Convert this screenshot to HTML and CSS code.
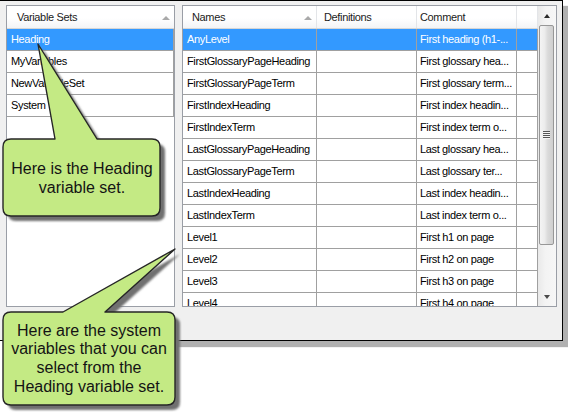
FILE: index.html
```html
<!DOCTYPE html>
<html>
<head>
<meta charset="utf-8">
<link rel="stylesheet" href="styles.css">
</head>
<body>
<div class="window">
  <div class="panes">
    <div class="list sets">
      <div class="hdr"><div class="hcell first"><span>Variable Sets</span><span class="sort"></span></div></div>
      <div class="row sel"><div class="cell">Heading</div></div>
      <div class="row"><div class="cell">MyVariables</div></div>
      <div class="row"><div class="cell">NewVariableSet</div></div>
      <div class="row"><div class="cell">System</div></div>
    </div>
    <div class="list vars">
      <div class="grid">
        <div class="hdr">
          <div class="hcell c1 first"><span>Names</span><span class="sort"></span></div>
          <div class="hcell c2"><span>Definitions</span></div>
          <div class="hcell c3"><span>Comment</span></div>
          <div class="hcell c4"></div>
        </div>
        <div class="row sel"><div class="cell c1">AnyLevel</div><div class="cell c2"></div><div class="cell c3">First heading (h1-...</div><div class="cell c4"></div></div>
        <div class="row"><div class="cell c1">FirstGlossaryPageHeading</div><div class="cell c2"></div><div class="cell c3">First glossary hea...</div><div class="cell c4"></div></div>
        <div class="row"><div class="cell c1">FirstGlossaryPageTerm</div><div class="cell c2"></div><div class="cell c3">First glossary term...</div><div class="cell c4"></div></div>
        <div class="row"><div class="cell c1">FirstIndexHeading</div><div class="cell c2"></div><div class="cell c3">First index headin...</div><div class="cell c4"></div></div>
        <div class="row"><div class="cell c1">FirstIndexTerm</div><div class="cell c2"></div><div class="cell c3">First index term o...</div><div class="cell c4"></div></div>
        <div class="row"><div class="cell c1">LastGlossaryPageHeading</div><div class="cell c2"></div><div class="cell c3">Last glossary hea...</div><div class="cell c4"></div></div>
        <div class="row"><div class="cell c1">LastGlossaryPageTerm</div><div class="cell c2"></div><div class="cell c3">Last glossary ter...</div><div class="cell c4"></div></div>
        <div class="row"><div class="cell c1">LastIndexHeading</div><div class="cell c2"></div><div class="cell c3">Last index headin...</div><div class="cell c4"></div></div>
        <div class="row"><div class="cell c1">LastIndexTerm</div><div class="cell c2"></div><div class="cell c3">Last index term o...</div><div class="cell c4"></div></div>
        <div class="row"><div class="cell c1">Level1</div><div class="cell c2"></div><div class="cell c3">First h1 on page</div><div class="cell c4"></div></div>
        <div class="row"><div class="cell c1">Level2</div><div class="cell c2"></div><div class="cell c3">First h2 on page</div><div class="cell c4"></div></div>
        <div class="row"><div class="cell c1">Level3</div><div class="cell c2"></div><div class="cell c3">First h3 on page</div><div class="cell c4"></div></div>
        <div class="row"><div class="cell c1">Level4</div><div class="cell c2"></div><div class="cell c3">First h4 on page</div><div class="cell c4"></div></div>
      </div>
      <div class="scroll">
        <div class="sbtn"><span class="arr up"></span></div>
        <div class="thumb"><span class="grip"></span></div>
        <div class="track"></div>
        <div class="sbtn"><span class="arr down"></span></div>
      </div>
    </div>
  </div>
</div>

<svg class="callouts" width="568" height="420" viewBox="0 0 568 420">
  <defs>
    <filter id="soft" x="-10%" y="-10%" width="120%" height="120%">
      <feGaussianBlur stdDeviation="0.8"/>
    </filter>
  </defs>
  <g transform="translate(5,5)" filter="url(#soft)">
    <path class="shadow" d="M11,139 L55,139 L38,44 L97,139 L152,139 Q160,139 160,147 L160,208 Q160,216 152,216 L11,216 Q3,216 3,208 L3,147 Q3,139 11,139 Z"/>
    <path class="shadow" d="M11,312 L63,312 L175,249 L105,312 L167,312 Q175,312 175,320 L175,397 Q175,405 167,405 L11,405 Q3,405 3,397 L3,320 Q3,312 11,312 Z"/>
  </g>
  <path class="bubble" d="M11,139 L55,139 L38,44 L97,139 L152,139 Q160,139 160,147 L160,208 Q160,216 152,216 L11,216 Q3,216 3,208 L3,147 Q3,139 11,139 Z"/>
  <path class="bubble" d="M11,312 L63,312 L175,249 L105,312 L167,312 Q175,312 175,320 L175,397 Q175,405 167,405 L11,405 Q3,405 3,397 L3,320 Q3,312 11,312 Z"/>
</svg>
<div class="note n1">Here is the Heading<br>variable set.</div>
<div class="note n2">Here are the system<br>variables that you can<br>select from the<br>Heading variable set.</div>
</body>
</html>
```

FILE: styles.css
```css
body {
  margin: 0;
  background: #fff;
  font-family: "Liberation Sans", Arial, sans-serif;
  position: relative;
  width: 568px;
  height: 420px;
  overflow: hidden;
}

.window {
  width: 551px;
  padding: 4px 5px 33px 6px;
  border-top: 1px solid #000;
  border-right: 1px solid #000;
  border-bottom: 1px solid #000;
  background: #f0f0f0;
  box-shadow: 5px 6px 1px #b0b0b0;
}

.panes {
  display: flex;
  gap: 7px;
  height: 302px;
}

.list {
  box-sizing: border-box;
  height: 302px;
  border: 1px solid #9a9ea6;
  background: #fff;
  overflow: hidden;
  font-size: 11px;
  letter-spacing: -0.35px;
  color: #000;
}

.sets { width: 169px; }
.vars { width: 375px; display: flex; }

.grid { width: 355px; }

.hdr {
  display: flex;
  height: 22px;
  border-bottom: 1px solid #d5d5d5;
  background: linear-gradient(#ffffff 0%, #ffffff 55%, #f3f4f6 100%);
}

.hcell {
  box-sizing: border-box;
  display: flex;
  align-items: center;
  justify-content: space-between;
  padding: 0 4px 0 7px;
  border-right: 1px solid #e3e5e8;
  color: #1b1b1b;
  height: 22px;
}
.sets .hcell { width: 167px; padding-left: 10px; border-right: none; }
.hcell.first { padding-left: 9px; }
.sets .hcell.first { padding-left: 10px; }

.sort {
  width: 0;
  height: 0;
  border-left: 4px solid transparent;
  border-right: 4px solid transparent;
  border-bottom: 4px solid #a9a9a9;
  margin-top: 1px;
}

.row {
  display: flex;
  height: 21px;
  border-bottom: 1px solid #a0a0a0;
}
.row.sel { background: #3399ff; color: #fff; }

.cell {
  box-sizing: border-box;
  height: 21px;
  line-height: 21px;
  padding-left: 4px;
  white-space: nowrap;
  overflow: hidden;
  border-right: 1px solid #a0a0a0;
}
.sets .cell { width: 167px; }

.c1 { width: 134px; }
.c2 { width: 100px; }
.c3 { width: 100px; padding-left: 3px; }
.c4 { width: 21px; }

.scroll {
  width: 18px;
  display: flex;
  flex-direction: column;
  background: linear-gradient(to right, #e9e9e9, #f3f3f3 40%, #f7f7f7);
}

.sbtn {
  height: 18px;
  display: flex;
  align-items: center;
  justify-content: center;
}

.arr {
  width: 0;
  height: 0;
  border-left: 3.5px solid transparent;
  border-right: 3.5px solid transparent;
}
.arr.up { border-bottom: 4px solid #2a2a2a; margin-top: 1px; }
.arr.down { border-top: 4px solid #4a4a4a; }

.thumb {
  box-sizing: border-box;
  height: 220px;
  margin: 1px 2px 0 1px;
  border: 1px solid #979797;
  border-radius: 2px;
  background: linear-gradient(to right, #f4f4f4, #ececec 35%, #dadada 60%, #cfcfcf);
  display: flex;
  align-items: center;
  justify-content: center;
}

.grip {
  width: 7px;
  height: 8px;
  background: repeating-linear-gradient(#555 0 1px, #f4f4f4 1px 2px);
}

.track { flex: 1; }

.callouts {
  position: absolute;
  left: 0;
  top: 0;
  pointer-events: none;
}
.shadow { fill: #6f6f6f; }
.bubble {
  fill: #c4ea84;
  stroke: #262626;
  stroke-width: 1.4;
  stroke-linejoin: round;
}

.note {
  position: absolute;
  display: flex;
  align-items: center;
  justify-content: center;
  text-align: center;
  font-family: "Liberation Sans", Arial, sans-serif;
  font-size: 16px;
  line-height: 18.7px;
  color: #141414;
}
.n1 { left: 3px; top: 140px; width: 158px; height: 78px; }
.n2 { left: 3px; top: 313px; width: 172px; height: 92px; }
```
